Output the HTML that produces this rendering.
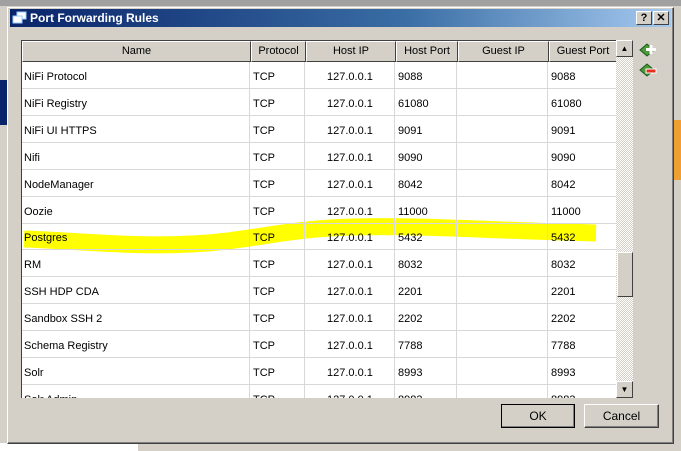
<!DOCTYPE html>
<html><head><style>
*{margin:0;padding:0;box-sizing:border-box}
body{width:681px;height:451px;overflow:hidden;background:#d4d0c8;font-family:"Liberation Sans",sans-serif;font-size:11px;color:#000;position:relative}
.abs{position:absolute}
#dlg{left:7px;top:7px;width:667px;height:437px;background:#d4d0c8;border:1px solid #fff;border-right-color:#404040;border-bottom-color:#404040;box-shadow:inset -1px -1px 0 #808080}
#title{left:10px;top:9px;width:661px;height:18px;background:linear-gradient(to right,#0a246a,#3a6ea5 60%,#a6caf0);color:#fff;font-weight:bold;font-size:12px;line-height:18px;padding-left:20px}
.tb{top:11px;width:16px;height:14px;background:#d4d0c8;border:1px solid #fff;border-right-color:#404040;border-bottom-color:#404040;font-weight:bold;font-size:11px;text-align:center;line-height:12px;color:#000}
#tbl{left:21px;top:40px;width:595px;height:358px;background:#fff;overflow:hidden;border-left:1px solid #404040;border-top:1px solid #404040}
.hd{position:absolute;top:0;height:21px;background:#d4d0c8;border:1px solid #fff;border-right-color:#404040;border-bottom-color:#404040;text-align:center;line-height:19px}
#sb{left:616px;top:40px;width:17px;height:358px;background:repeating-conic-gradient(#d4d0c8 0 25%,#fff 0 50%) 0 0/2px 2px}
.btn3{position:absolute;background:#d4d0c8;border:1px solid #fff;border-right-color:#404040;border-bottom-color:#404040}
.pb{position:absolute;top:404px;height:24px;background:#d4d0c8;border:1px solid #fff;border-right-color:#404040;border-bottom-color:#404040;box-shadow:inset -1px -1px 0 #808080;text-align:center;line-height:22px;font-size:12px}
#body{position:absolute;left:22px;top:62px;width:594px;height:336px;overflow:hidden}
.r{position:absolute;left:0;width:594px;height:27px;border-bottom:1px solid #d8d8d8;line-height:27px}
.r span{position:absolute;top:2px}
.r i{position:absolute;top:0;height:27px;border-left:1px solid #d8d8d8}
</style></head><body>
<div class="abs" style="left:0;top:0;width:681px;height:6px;background:#a0a0a0"></div>
<div class="abs" style="left:0;top:443px;width:138px;height:8px;background:#fff"></div>
<div class="abs" style="left:0;top:80px;width:7px;height:45px;background:#0a246a"></div>
<div id="dlg" class="abs"></div>
<div id="title" class="abs">Port Forwarding Rules</div>
<svg class="abs" style="left:12px;top:11px" width="16" height="14"><rect x="5" y="1" width="9" height="7" fill="#fff" stroke="#9cf"/><rect x="1" y="5" width="9" height="7" fill="#fff" stroke="#9cf"/></svg>
<div class="abs tb" style="left:636px">?</div>
<div class="abs tb" style="left:653px">✕</div>
<div id="tbl" class="abs">
<div class="hd" style="left:0;width:229px">Name</div>
<div class="hd" style="left:229px;width:55px">Protocol</div>
<div class="hd" style="left:284px;width:90px">Host IP</div>
<div class="hd" style="left:374px;width:62px">Host Port</div>
<div class="hd" style="left:436px;width:91px">Guest IP</div>
<div class="hd" style="left:527px;width:68px">Guest Port</div>
</div>
<div id="body">
<svg style="position:absolute;left:0;top:155px" width="580" height="40"><path d="M2 22 C60 24,110 30,170 27 C230 24,260 12,330 10 C400 8,480 14,574 16" stroke="#ffff00" stroke-width="17" fill="none"/></svg>
<div id="rows"></div>
</div>
<div id="sb" class="abs"></div>
<div class="btn3" style="left:616px;top:40px;width:17px;height:17px;text-align:center;font-size:8px;line-height:15px">▲</div>
<div class="btn3" style="left:617px;top:252px;width:16px;height:45px"></div>
<div class="btn3" style="left:616px;top:381px;width:17px;height:17px;text-align:center;font-size:8px;line-height:15px">▼</div>
<svg class="abs" style="left:639px;top:42px" width="18" height="36"><path d="M1 8 L8 2 L15 8 L8 14Z" fill="#4a9a3a" stroke="#1a5a1a"/><rect x="7" y="6" width="10" height="3" fill="#fff"/><rect x="10.5" y="3" width="3" height="9" fill="#fff"/><path d="M1 28 L8 22 L15 28 L8 34Z" fill="#4a9a3a" stroke="#1a5a1a"/><rect x="7" y="27" width="10" height="4" fill="#e03020" stroke="#fff"/></svg>
<div class="pb" style="left:501px;width:74px;border:1px solid #000">OK</div>
<div class="pb" style="left:584px;width:75px">Cancel</div>
<div class="abs" style="left:674px;top:120px;width:7px;height:60px;background:#f0a030"></div>
<script>
var d=[["NiFi Protocol","9088"],["NiFi Registry","61080"],["NiFi UI HTTPS","9091"],["Nifi","9090"],["NodeManager","8042"],["Oozie","11000"],["Postgres","5432"],["RM","8032"],["SSH HDP CDA","2201"],["Sandbox SSH 2","2202"],["Schema Registry","7788"],["Solr","8993"],["Solr Admin","8983"]];
var h="";
d.forEach(function(r,i){var t=Math.round(i*26.9);
h+='<div class="r" style="top:'+t+'px"><span style="left:2px">'+r[0]+'</span><span style="left:231px">TCP</span><span style="left:305px">127.0.0.1</span><span style="left:376px">'+r[1]+'</span><span style="left:529px">'+r[1]+'</span><i style="left:227px"></i><i style="left:282px"></i><i style="left:372px"></i><i style="left:434px"></i><i style="left:525px"></i></div>';});
document.getElementById("rows").innerHTML=h;
</script>
</body></html>
